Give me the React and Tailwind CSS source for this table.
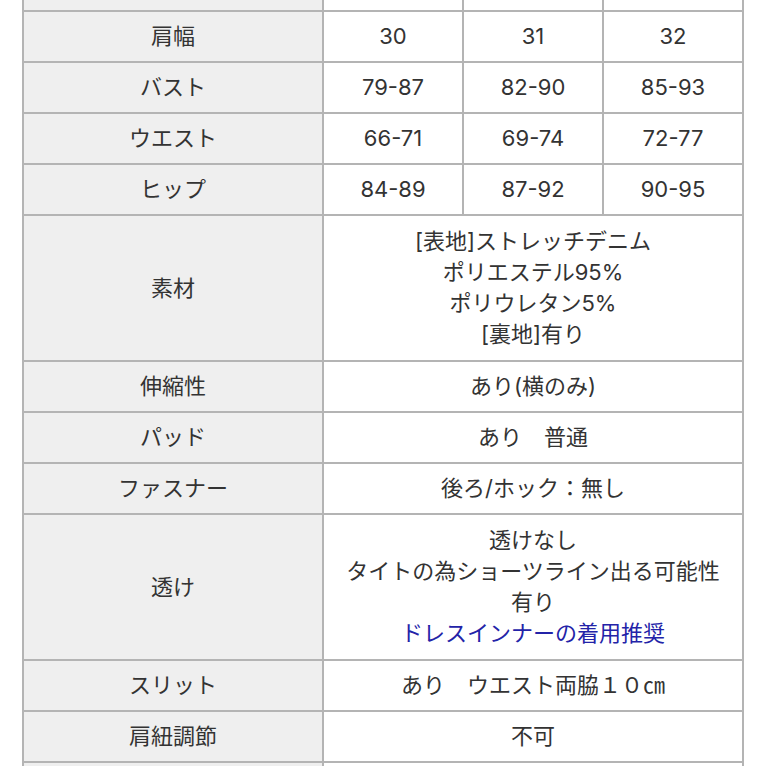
import React from "react";

const font = { fontFamily: '"Inter", "Noto Sans CJK JP", sans-serif' };

function Label({ children }) {
  return (
    <div className="bg-[#efefef] flex items-center justify-center text-[22px] text-[#333]">
      {children}
    </div>
  );
}

function Cell({ children, span }) {
  return (
    <div
      className={
        "bg-white flex flex-col items-center justify-center text-center text-[22px] leading-[31px] text-[#333] " +
        (span ? "col-span-3" : "")
      }
    >
      {children}
    </div>
  );
}

const sizeRows = [
  ["肩幅", "30", "31", "32"],
  ["バスト", "79-87", "82-90", "85-93"],
  ["ウエスト", "66-71", "69-74", "72-77"],
  ["ヒップ", "84-89", "87-92", "90-95"],
];

export default function App() {
  return (
    <div className="w-[766px] h-[766px] overflow-hidden bg-white" style={font}>
      <div className="ml-[22px] w-[722px] bg-[#b4b4b4] px-[2px] grid grid-cols-[298px_138px_138px_138px] grid-rows-[10px_49px_49px_49px_49px_144px_49px_49px_49px_144px_49px_49px_49px] gap-[2px]">
        <div className="bg-[#efefef]" />
        <div className="bg-white" />
        <div className="bg-white" />
        <div className="bg-white" />
        {sizeRows.map((r) => (
          <React.Fragment key={r[0]}>
            <Label>{r[0]}</Label>
            <Cell>{r[1]}</Cell>
            <Cell>{r[2]}</Cell>
            <Cell>{r[3]}</Cell>
          </React.Fragment>
        ))}
        <Label>素材</Label>
        <Cell span>
          <div>[表地]ストレッチデニム</div>
          <div>ポリエステル95%</div>
          <div>ポリウレタン5%</div>
          <div>[裏地]有り</div>
        </Cell>
        <Label>伸縮性</Label>
        <Cell span>あり(横のみ)</Cell>
        <Label>パッド</Label>
        <Cell span>あり　普通</Cell>
        <Label>ファスナー</Label>
        <Cell span>後ろ/ホック：無し</Cell>
        <Label>透け</Label>
        <Cell span>
          <div>透けなし</div>
          <div>タイトの為ショーツライン出る可能性</div>
          <div>有り</div>
          <div className="text-[#2323a8]">ドレスインナーの着用推奨</div>
        </Cell>
        <Label>スリット</Label>
        <Cell span>あり　ウエスト両脇１０㎝</Cell>
        <Label>肩紐調節</Label>
        <Cell span>不可</Cell>
        <Label> </Label>
        <Cell span> </Cell>
      </div>
    </div>
  );
}
